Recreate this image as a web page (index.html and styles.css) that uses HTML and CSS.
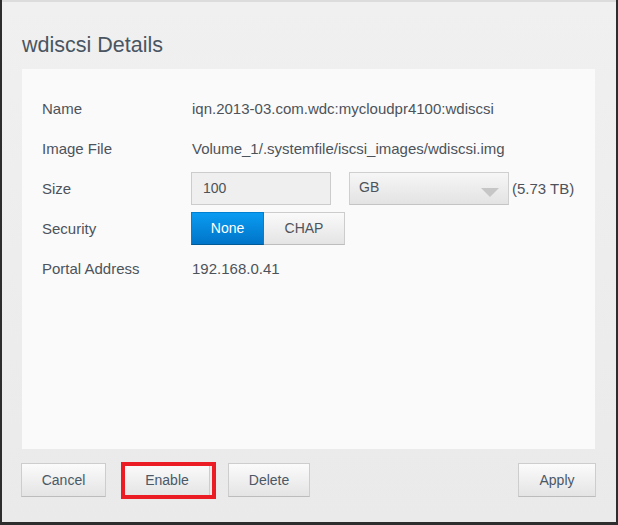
FILE: index.html
```html
<!DOCTYPE html>
<html>
<head>
<meta charset="utf-8">
<link rel="stylesheet" href="styles.css">
</head>
<body>
<div class="dialog">
  <h1 class="title">wdiscsi Details</h1>
  <div class="panel">
    <div class="row"><div class="label">Name</div><div class="value">iqn.2013-03.com.wdc:mycloudpr4100:wdiscsi</div></div>
    <div class="row"><div class="label">Image File</div><div class="value">Volume_1/.systemfile/iscsi_images/wdiscsi.img</div></div>
    <div class="row"><div class="label">Size</div>
      <div class="value controls">
        <div class="input">100</div>
        <div class="select"><span>GB</span><span class="arrow"></span></div>
        <span class="cap">(5.73 TB)</span>
      </div>
    </div>
    <div class="row"><div class="label">Security</div>
      <div class="value controls">
        <div class="toggle"><span class="opt on">None</span><span class="opt">CHAP</span></div>
      </div>
    </div>
    <div class="row"><div class="label">Portal Address</div><div class="value">192.168.0.41</div></div>
  </div>
  <div class="footer">
    <div class="btn w-cancel">Cancel</div>
    <div class="btn w-enable marked">Enable</div>
    <div class="btn w-delete">Delete</div>
    <div class="spacer"></div>
    <div class="btn w-apply">Apply</div>
  </div>
</div>
</body>
</html>
```
FILE: styles.css
```css
html, body {
  margin: 0;
  padding: 0;
}
body {
  background: #2d2d2d;
  width: 618px;
  height: 525px;
  overflow: hidden;
  font-family: "Liberation Sans", Arial, sans-serif;
}
.dialog {
  margin-left: 2px;
  width: 614px;
  height: 522px;
  box-sizing: border-box;
  border-top: 2px solid #dcdcdc;
  background: linear-gradient(#f0f0f0, #eaeaea);
  padding: 33px 21px 0 20px;
}
.title {
  margin: 0 0 14px;
  font-size: 21.5px;
  line-height: 20px;
  font-weight: normal;
  color: #4a5561;
}
.panel {
  background: #fafafa;
  height: 380px;
  box-sizing: border-box;
  padding: 19px 20px 0 20px;
}
.row {
  display: flex;
  align-items: center;
  height: 40px;
  font-size: 15px;
  color: #4d535a;
}
.label {
  width: 150px;
  flex: none;
}
.value.controls {
  display: flex;
  align-items: center;
  margin-left: -1px;
  font-size: 14px;
}
.input {
  width: 140px;
  height: 33px;
  box-sizing: border-box;
  border: 1px solid #cccccc;
  background: #efefef;
  padding-left: 11px;
  line-height: 31px;
}
.select {
  margin-left: 18px;
  width: 160px;
  height: 33px;
  box-sizing: border-box;
  border: 1px solid #cfcfcf;
  border-bottom-color: #c4c4c4;
  background: linear-gradient(#f6f6f6, #e3e3e3);
  padding-left: 9px;
  line-height: 29px;
  display: flex;
  justify-content: space-between;
  align-items: flex-start;
}
.arrow {
  width: 0;
  height: 0;
  border-left: 9px solid transparent;
  border-right: 9px solid transparent;
  border-top: 9px solid #c6c6c6;
  margin: 15px 9px 0 0;
}
.cap {
  margin-left: 3px;
  font-size: 15px;
}
.toggle {
  display: flex;
  height: 33px;
}
.opt {
  box-sizing: border-box;
  height: 33px;
  line-height: 31px;
  text-align: center;
  border: 1px solid #cccccc;
  border-bottom-color: #bdbdbd;
  background: linear-gradient(#fafafa, #e4e4e4);
  width: 81px;
  color: #4d535a;
}
.opt.on {
  width: 73px;
  color: #ffffff;
  border-color: #0080d0;
  border-bottom-color: #005a96;
  background: linear-gradient(#0a9cf2, #0074c8);
}
.opt + .opt {
  border-left: none;
}
.footer {
  display: flex;
  margin: 14px -1px 0 -1px;
  gap: 18px;
}
.spacer {
  flex: 1;
}
.btn {
  position: relative;
  box-sizing: border-box;
  height: 34px;
  line-height: 32px;
  font-size: 14px;
  text-align: center;
  color: #4b5866;
  border: 1px solid #cdcdcd;
  border-bottom-color: #bcbcbc;
  background: linear-gradient(#fbfbfb, #e4e4e4);
}
.w-cancel { width: 85px; }
.w-enable { width: 86px; }
.w-delete { width: 82px; }
.w-apply { width: 78px; }
.marked::after {
  content: "";
  position: absolute;
  left: -4px;
  top: -2px;
  right: -7px;
  bottom: -3px;
  border: 4px solid #ec1c24;
}
```
